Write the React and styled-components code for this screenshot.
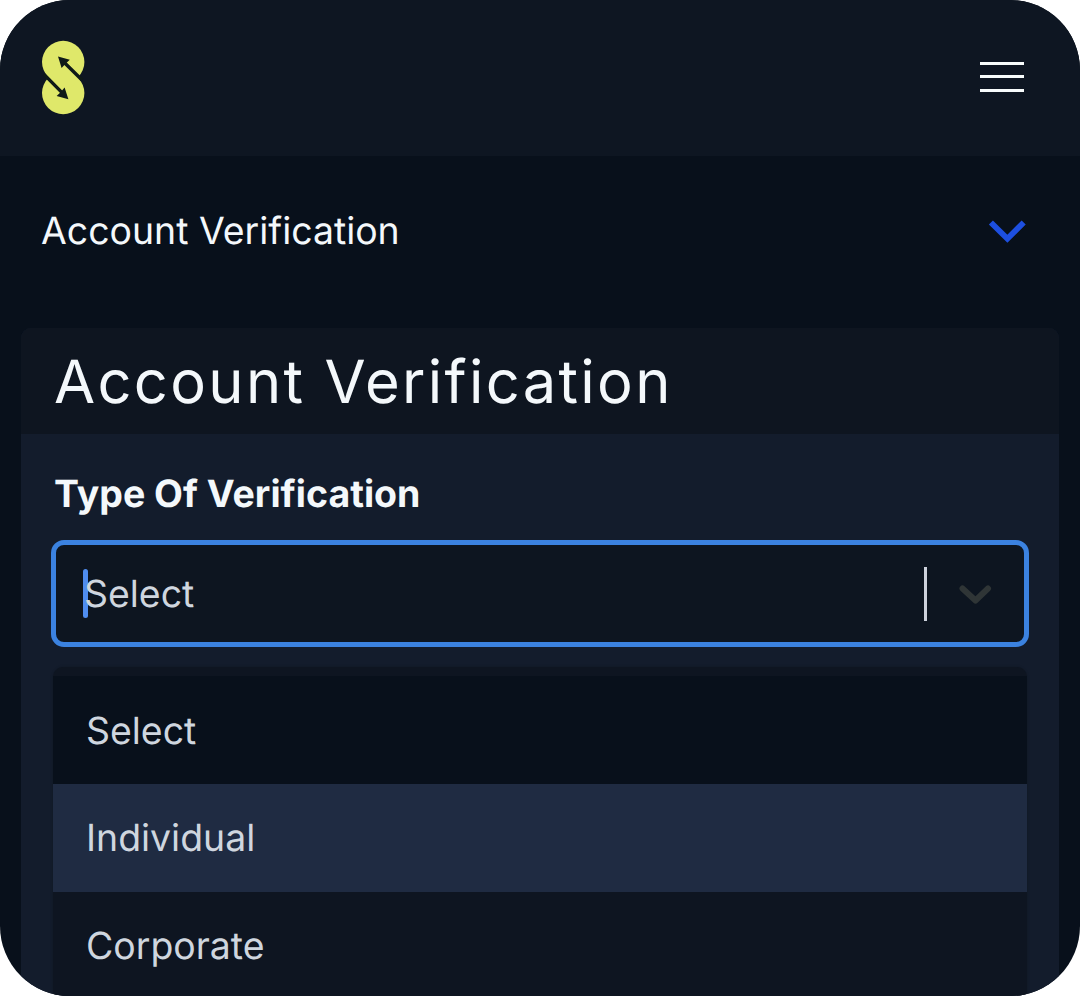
import { useState } from "react";
import styled, { createGlobalStyle } from "styled-components";

const options = ["Select", "Individual", "Corporate"];

function Logo() {
  return (
    <LogoSvg viewBox="0 0 44 75" aria-label="Logo">
      <circle cx="22.2" cy="22" r="21.2" fill="#dfe86a" />
      <circle cx="22.2" cy="53" r="21.2" fill="#dfe86a" />
      <path d="M22 20 L38.5 36.5 L38.5 39.5 L22 55 L5.8 38.5 L5.8 35.5 Z" fill="#dfe86a" />
      <path
        d="M22.5 21.8 L41 40 M3 34.4 L22 53.6"
        stroke="#0f1a18"
        strokeWidth="3.4"
        fill="none"
      />
      <path
        d="M17 16.4 L28.8 19.8 L24.8 23.4 L20.6 28 Z M27.4 59.2 L15.6 56 L19.6 52.2 L23.6 47.6 Z"
        fill="#0f1a18"
      />
    </LogoSvg>
  );
}

function App() {
  const [value, setValue] = useState("Select");

  return (
    <>
      <GlobalStyle />
      <Screen>
        <Header>
          <Logo />
          <MenuButton aria-label="Menu">
            <MenuLine />
            <MenuLine />
            <MenuLine />
          </MenuButton>
        </Header>
        <SectionBar>
          <SectionName>Account Verification</SectionName>
          <svg width="38" height="24" viewBox="0 0 38 24" fill="none">
            <path d="M2.9 2.5 L19.4 18.7 L35.7 2.5" stroke="#1d4fe0" strokeWidth="5.8" />
          </svg>
        </SectionBar>
        <Card>
          <CardHeader>
            <Title>Account Verification</Title>
          </CardHeader>
          <CardBody>
            <Label>Type Of Verification</Label>
            <Control>
              <Caret />
              <Value>{value}</Value>
              <Separator />
              <Arrow viewBox="0 0 34 22" fill="none">
                <path
                  d="M4.5 4.5 L17.5 16.5 L30 4.5"
                  stroke="#2f3536"
                  strokeWidth="6"
                  strokeLinecap="round"
                  strokeLinejoin="round"
                />
              </Arrow>
            </Control>
            <Menu>
              {options.map((option) => (
                <Option
                  key={option}
                  $selected={option === value}
                  $focused={option === "Individual"}
                  onClick={() => setValue(option)}
                >
                  {option}
                </Option>
              ))}
            </Menu>
          </CardBody>
        </Card>
      </Screen>
    </>
  );
}

const GlobalStyle = createGlobalStyle`
  * {
    box-sizing: border-box;
  }

  body {
    margin: 0;
    background-color: #ffffff;
    font-family: Inter, sans-serif;
    text-rendering: geometricPrecision;
  }
`;

const Screen = styled.div`
  width: 1080px;
  height: 996px;
  overflow: hidden;
  border-radius: 70px;
  display: flex;
  flex-direction: column;
  background-color: #08101b;
`;

const Header = styled.header`
  height: 156px;
  flex-shrink: 0;
  padding: 0 56px 0 41px;
  display: flex;
  align-items: center;
  justify-content: space-between;
  background-color: #0e1622;
`;

const LogoSvg = styled.svg`
  width: 44px;
  height: 75px;
  margin-bottom: 1px;
`;

const MenuButton = styled.button`
  width: 44px;
  padding: 0;
  margin-bottom: 3px;
  border: none;
  background: none;
  display: flex;
  flex-direction: column;
  gap: 10.5px;
`;

const MenuLine = styled.span`
  height: 3px;
  background-color: #f8fcfc;
`;

const SectionBar = styled.div`
  height: 172px;
  flex-shrink: 0;
  padding: 0 54px 20px 41px;
  display: flex;
  align-items: center;
  justify-content: space-between;
`;

const SectionName = styled.p`
  margin: 0 0 1px;
  font-size: 37.4px;
  color: #f4f8fb;
`;

const Card = styled.section`
  flex: 1;
  margin: 0 21px;
  border-radius: 10px 10px 0 0;
  overflow: hidden;
  background-color: #131c2c;
`;

const CardHeader = styled.div`
  height: 106px;
  padding: 2px 33px 0;
  display: flex;
  align-items: center;
  background-color: #0e1520;
`;

const Title = styled.h1`
  margin: 0;
  font-size: 59.6px;
  font-weight: 400;
  letter-spacing: 2.35px;
  color: #f4f8fb;
`;

const CardBody = styled.div`
  padding: 36px 30px 0;
`;

const Label = styled.p`
  margin: 0 3px;
  height: 70px;
  line-height: 50px;
  font-size: 37.5px;
  font-weight: 700;
  color: #f4f8fb;
`;

const Control = styled.div`
  height: 107px;
  padding: 0 32px 0 27px;
  border: 5px solid #3b82e0;
  border-radius: 13px;
  display: flex;
  align-items: center;
  background-color: #0d1520;
`;

const Caret = styled.span`
  width: 5px;
  height: 49px;
  margin-right: -4px;
  border-radius: 3px;
  background-color: #4f8df0;
`;

const Value = styled.span`
  flex: 1;
  margin-top: 1px;
  font-size: 37.4px;
  color: #cfd6df;
`;

const Separator = styled.span`
  width: 3px;
  height: 54px;
  margin-right: 31px;
  background-color: #cdd2dc;
`;

const Arrow = styled.svg`
  width: 34px;
  height: 22px;
  margin-top: 3px;
`;

const Menu = styled.div`
  margin: 20px 2px 0;
  padding-top: 9px;
  height: 400px;
  border-radius: 10px;
  background-color: #0e1521;
  box-shadow: 0 0 3px rgba(0, 0, 0, 0.2);
`;

const Option = styled.div`
  height: ${(props) => (props.$selected ? "108px" : "107.5px")};
  padding: 2px 33px 0;
  display: flex;
  align-items: center;
  font-size: 37.4px;
  color: #cfd6df;
  background-color: ${(props) =>
    props.$selected ? "#08101b" : props.$focused ? "#1f2b42" : "transparent"};
`;

export default App;
